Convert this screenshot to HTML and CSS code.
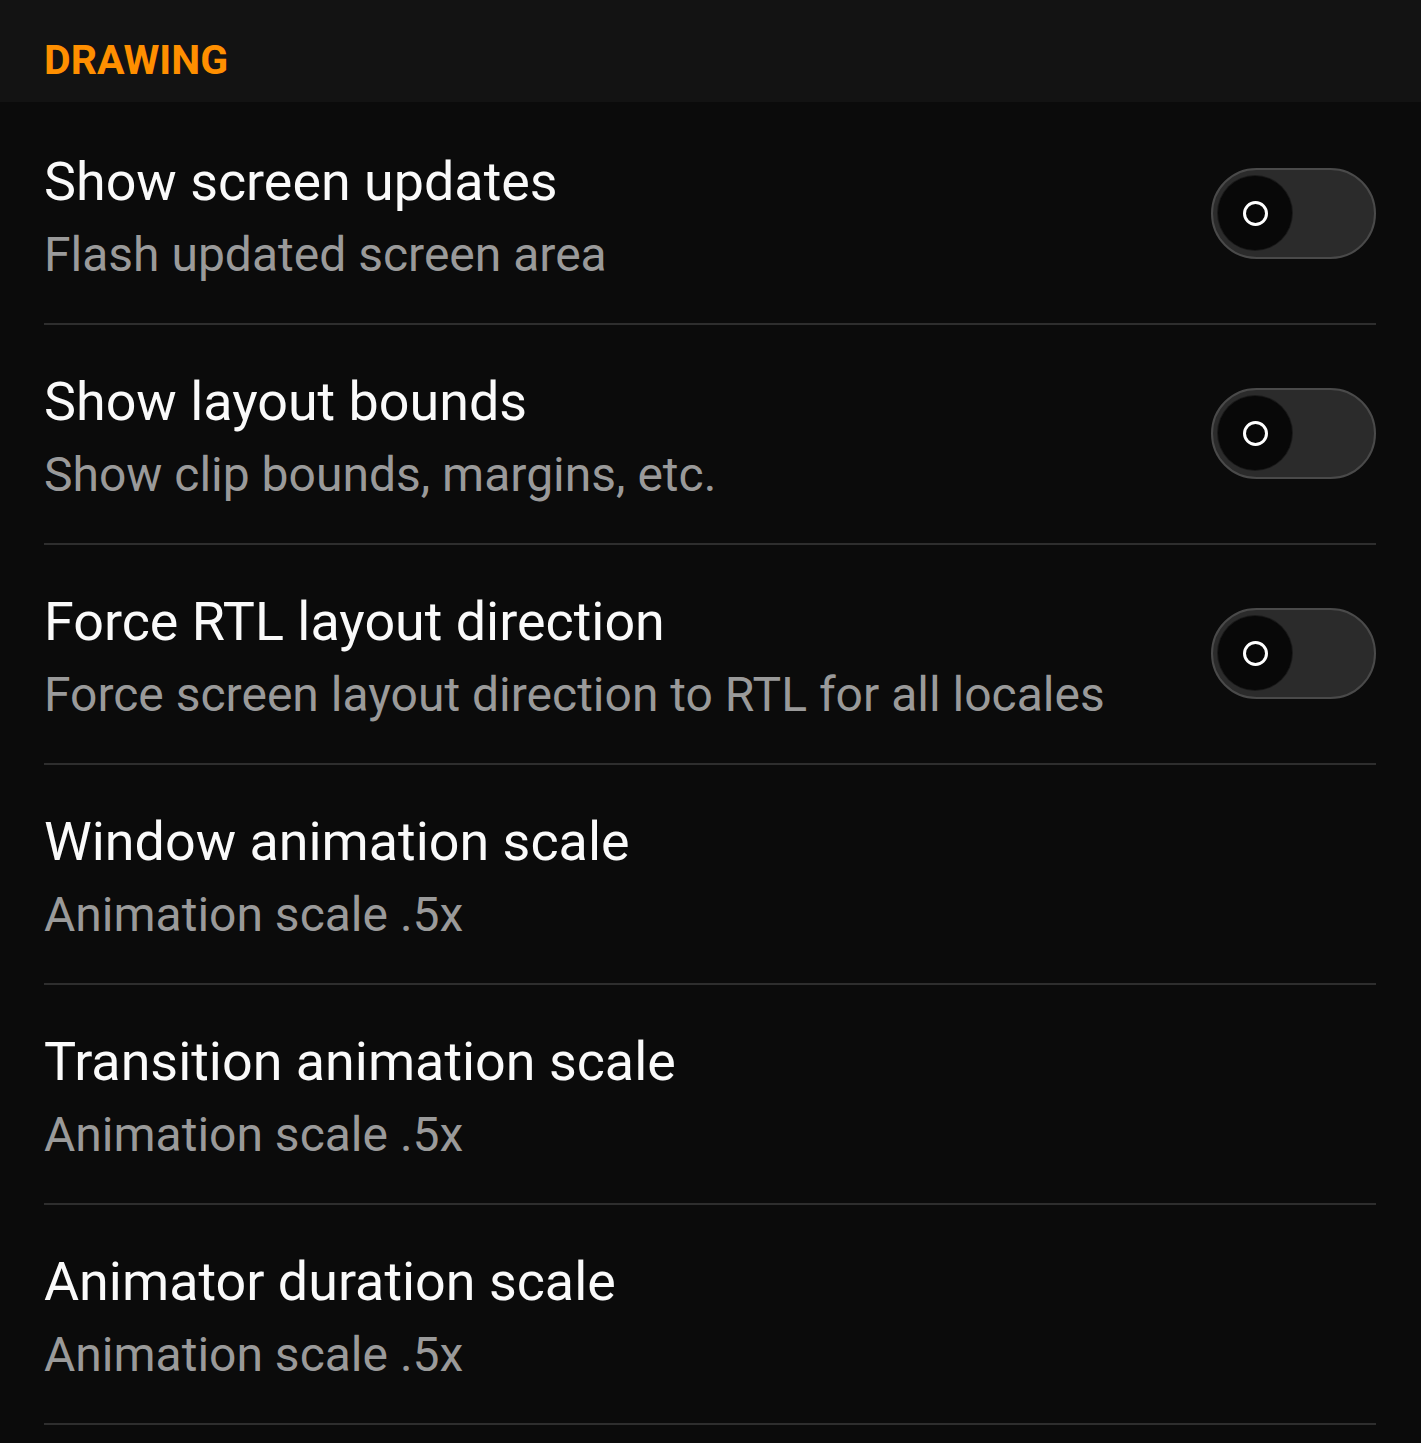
FILE: index.html
```html
<!DOCTYPE html>
<html lang="en">
<head>
    <meta charset="UTF-8">
    <meta name="viewport" content="width=device-width, initial-scale=1.0">
    <title>Developer options - Drawing</title>
    <link rel="stylesheet" href="styles.css">
</head>
<body>
    <div class="category">
        <h2 class="category-title">DRAWING</h2>
    </div>

    <div class="prefs">
        <div class="pref">
            <div class="pref-text">
                <div class="pref-title">Show screen updates</div>
                <div class="pref-summary">Flash updated screen area</div>
            </div>
            <div class="switch"><span class="thumb"><span class="ring"></span></span></div>
        </div>

        <div class="pref">
            <div class="pref-text">
                <div class="pref-title">Show layout bounds</div>
                <div class="pref-summary">Show clip bounds, margins, etc.</div>
            </div>
            <div class="switch"><span class="thumb"><span class="ring"></span></span></div>
        </div>

        <div class="pref">
            <div class="pref-text">
                <div class="pref-title">Force RTL layout direction</div>
                <div class="pref-summary">Force screen layout direction to RTL for all locales</div>
            </div>
            <div class="switch"><span class="thumb"><span class="ring"></span></span></div>
        </div>

        <div class="pref">
            <div class="pref-text">
                <div class="pref-title">Window animation scale</div>
                <div class="pref-summary">Animation scale .5x</div>
            </div>
        </div>

        <div class="pref">
            <div class="pref-text">
                <div class="pref-title">Transition animation scale</div>
                <div class="pref-summary">Animation scale .5x</div>
            </div>
        </div>

        <div class="pref">
            <div class="pref-text">
                <div class="pref-title">Animator duration scale</div>
                <div class="pref-summary">Animation scale .5x</div>
            </div>
        </div>
    </div>
</body>
</html>
```

FILE: styles.css
```css
body {
    margin: 0;
    background-color: #0b0b0b;
    font-family: Roboto, 'Liberation Sans', sans-serif;
    color: #fafafa;
}

.category {
    height: 102px;
    background-color: #131313;
    padding: 0 44px;
    display: flex;
    align-items: center;
}

.category-title {
    margin: 0;
    font-size: 41px;
    font-weight: 700;
    color: #ff8f00;
    line-height: 48px;
    margin-top: 18px;
}

.prefs {
    padding-top: 3px;
}

.pref {
    margin: 0 45px 0 44px;
    height: 218px;
    display: flex;
    align-items: center;
    justify-content: space-between;
    border-bottom: 2px solid #2e2e2e;
}

.pref-text {
    margin-top: 5px;
}

.pref-title {
    font-size: 53.85px;
    line-height: 64px;
    color: #fafafa;
}

.pref-summary {
    font-size: 48px;
    line-height: 58px;
    margin-top: 12px;
    color: #9a9a9a;
}

.switch {
    width: 156px;
    height: 87px;
    border: 2px solid #4a4a4a;
    border-radius: 46px;
    background-color: #2b2b2b;
    display: flex;
    align-items: center;
    padding-left: 5px;
    box-sizing: content-box;
    flex-shrink: 0;
    margin-top: -2px;
}

.thumb {
    width: 74px;
    height: 74px;
    border-radius: 50%;
    background-color: #080808;
    box-shadow: 0 0 0 1px #1a1a1a;
    display: flex;
    align-items: center;
    justify-content: center;
}

.ring {
    width: 19px;
    height: 19px;
    border: 3px solid #ffffff;
    border-radius: 50%;
}
```
